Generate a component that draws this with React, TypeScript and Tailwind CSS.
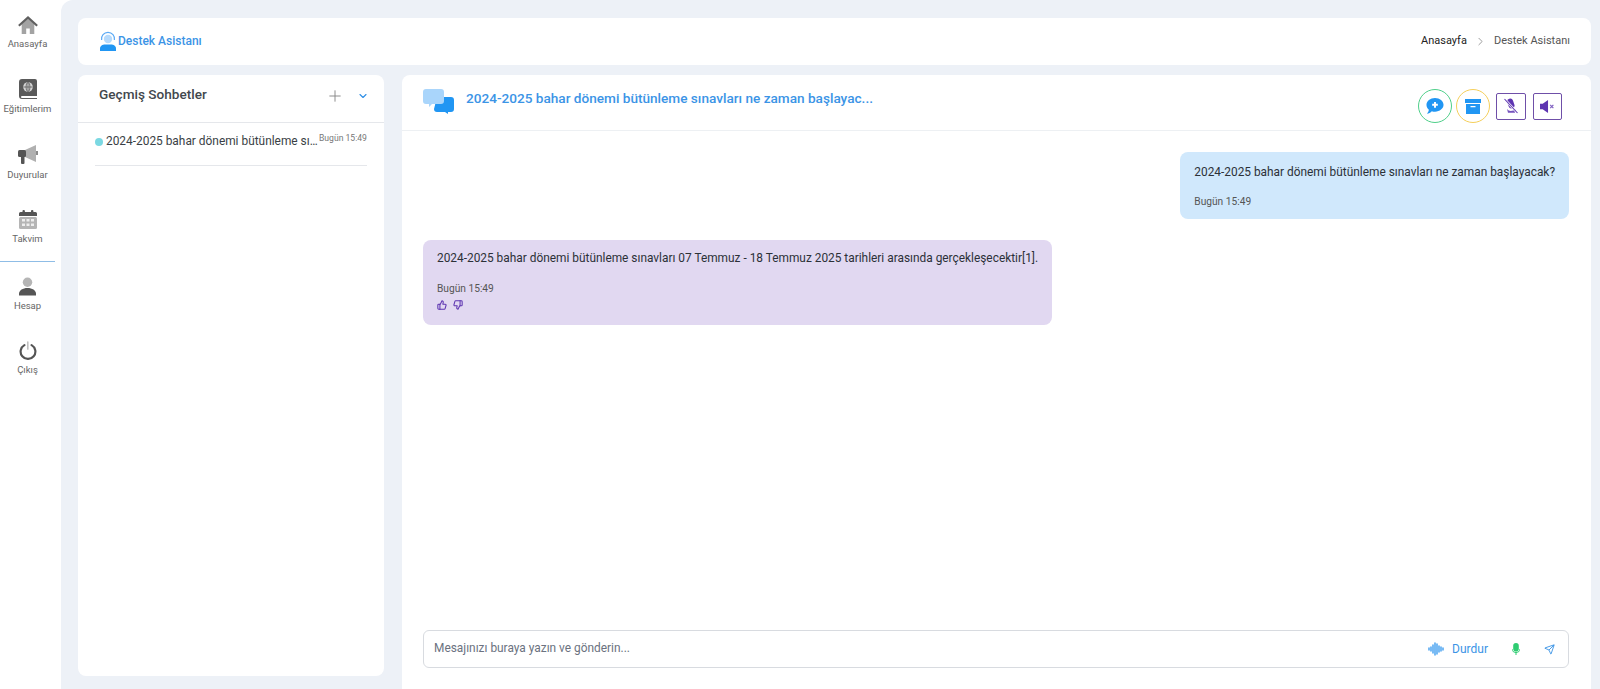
import { ChevronDown, ChevronRight, Plus, Send, ThumbsDown, ThumbsUp } from 'lucide-react';

const font = { fontFamily: 'Roboto, sans-serif' };

function HomeIcon() {
  return (
    <svg width="22" height="18" viewBox="0 0 24 20">
      <path d="M5 9 12 3l7 6v11h-5v-6h-4v6H5z" fill="#a3a3a3" />
      <path d="M1 10 12 0l11 10-1.600 1.600L12 3.400 2.600 11.600z" fill="#5f5f5f" />
    </svg>
  );
}

function BookIcon() {
  return (
    <svg width="18" height="20" viewBox="0 0 18 20">
      <path d="M3 0h13a2 2 0 0 1 2 2v15H3a1 1 0 0 0 0 2h15v1H3a3 3 0 0 1-3-3V3a3 3 0 0 1 3-3z" fill="#5a5a5a" />
      <circle cx="9" cy="8" r="4.800" fill="#d6d6d6" />
      <path d="M4.500 8h9M9 3.500v9" stroke="#5a5a5a" strokeWidth="0.800" />
      <ellipse cx="9" cy="8" rx="2" ry="4.500" fill="none" stroke="#5a5a5a" strokeWidth="0.800" />
    </svg>
  );
}

function MegaphoneIcon() {
  return (
    <svg width="20" height="20" viewBox="0 0 20 20">
      <path d="M7 5 18 0v17L7 12z" fill="#b0b0b0" />
      <rect x="0" y="5" width="8" height="7" rx="1.500" fill="#555" />
      <rect x="3" y="11" width="3.500" height="8" rx="1" fill="#555" />
      <rect x="18" y="6" width="2" height="4" fill="#8a8a8a" />
    </svg>
  );
}

function CalendarIcon() {
  return (
    <svg width="18" height="19" viewBox="0 0 18 19">
      <rect y="7" width="18" height="12" rx="1.500" fill="#b5b5b5" />
      <path d="M1.500 2h15A1.500 1.500 0 0 1 18 3.500V6H0V3.500A1.500 1.500 0 0 1 1.500 2z" fill="#555" />
      <rect x="3.500" y="0" width="2.400" height="4" rx="1" fill="#555" />
      <rect x="12" y="0" width="2.400" height="4" rx="1" fill="#555" />
      <path d="M3 9h3v2.500H3zM7.500 9h3v2.500h-3zM12 9h3v2.500h-3zM3 13.500h3V16H3zM7.500 13.500h3V16h-3zM12 13.500h3V16h-3z" fill="#eee" />
    </svg>
  );
}

function PersonIcon() {
  return (
    <svg width="17" height="19" viewBox="0 0 18 19">
      <circle cx="9" cy="5" r="5" fill="#b5b5b5" />
      <path d="M0 19v-2c0-3.500 4-6 9-6s9 2.500 9 6v2z" fill="#555" />
    </svg>
  );
}

function PowerIcon() {
  return (
    <svg width="18" height="19" viewBox="0 0 20 21">
      <path d="M6 4.500a8.200 8.200 0 1 0 8 0" fill="none" stroke="#555" strokeWidth="2.400" strokeLinecap="round" />
      <path d="M9.800 1v8" stroke="#bbb" strokeWidth="1.600" strokeLinecap="round" />
    </svg>
  );
}

function AgentIcon() {
  return (
    <svg width="18" height="20" viewBox="0 0 18 20">
      <path d="M2.600 9A6.500 6.500 0 1 1 15.400 9" fill="none" stroke="#5aa9f5" strokeWidth="1.200" />
      <circle cx="9" cy="8" r="4.200" fill="#b6dafc" />
      <path d="M1 20v-2.500C1 15 3.500 13.500 6 13.500h6c2.500 0 5 1.500 5 4V20z" fill="#2196f3" />
    </svg>
  );
}

function ChatsIcon() {
  return (
    <svg width="32" height="26" viewBox="0 0 32 26">
      <path d="M14 9h14a3 3 0 0 1 3 3v9a3 3 0 0 1-3 3h-3v2l-3-2h-8a3 3 0 0 1-3-3z" fill="#2196f3" />
      <path d="M3 1h15a3 3 0 0 1 3 3v9a3 3 0 0 1-3 3H9l-3 3v-3H3a3 3 0 0 1-3-3V4a3 3 0 0 1 3-3z" fill="#a9d5fb" />
    </svg>
  );
}

function BubblePlusIcon() {
  return (
    <svg width="18" height="16" viewBox="0 0 20 18">
      <path d="M10 0c5.300 0 9.600 3.400 9.600 7.700s-4.300 7.700-9.600 7.700c-1.300 0-2.500-.2-3.600-.6C5 16.300 3 17.400 1 17.600c1-1 1.900-2.600 2.100-4.300C1.400 11.900.4 9.900.4 7.700.4 3.400 4.700 0 10 0z" fill="#2196f3" />
      <path d="M10 4.500v6.400M6.800 7.700h6.400" stroke="#fff" strokeWidth="2.200" />
    </svg>
  );
}

function ArchiveIcon() {
  return (
    <svg width="16" height="15" viewBox="0 0 16 15">
      <rect width="16" height="4" fill="#2196f3" />
      <path d="M1 5h14v10H1zM5.500 7v1.200h5V7z" fill="#2196f3" fillRule="evenodd" />
    </svg>
  );
}

function MicOffIcon() {
  return (
    <svg width="16" height="16" viewBox="0 0 16 16">
      <path d="M5 3.500a3 3 0 0 1 6 0v4a3 3 0 0 1-6 0z" fill="#5e35b1" transform="rotate(-20 8 6)" />
      <path d="M4 11c2 2.600 5.500 2.600 8.500 0l-.6 3.800H5z" fill="#5e35b1" opacity="0.850" />
      <path d="M1.500 1 14.500 15" stroke="#fff" strokeWidth="2.400" />
      <path d="M1.500 1 14.500 15" stroke="#5e35b1" strokeWidth="1.100" />
    </svg>
  );
}

function SpeakerOffIcon() {
  return (
    <svg width="15" height="13" viewBox="0 0 14 12">
      <path d="M0 3.500h2.500L7.500 0v12L2.500 8.500H0z" fill="#5e35b1" />
      <path d="M9.500 4.500l3 3M12.500 4.500l-3 3" stroke="#7e5fc0" strokeWidth="1.100" />
    </svg>
  );
}

function WaveIcon() {
  return (
    <svg width="16" height="14" viewBox="0 0 16 14">
      <path d="M1 6v2M3 5v4M5 3v8M7 1v12M9 2v10M11 4v6M13 5v4M15 6v2" stroke="#3f9df0" strokeWidth="1.400" strokeLinecap="round" />
    </svg>
  );
}

function MicIcon() {
  return (
    <svg width="8" height="12" viewBox="0 0 8 12">
      <rect x="1.200" width="5.600" height="8.500" rx="2.800" fill="#2ecc71" />
      <path d="M0 6c0 2.200 1.800 3.500 4 3.500S8 8.200 8 6M4 9.500V12" fill="none" stroke="#2ecc71" />
    </svg>
  );
}

const navTop = [
  { label: 'Anasayfa', icon: <HomeIcon />, h: 'h-[65px]' },
  { label: 'Eğitimlerim', icon: <BookIcon />, h: 'h-[66px]' },
  { label: 'Duyurular', icon: <MegaphoneIcon />, h: 'h-[64px]' },
  { label: 'Takvim', icon: <CalendarIcon />, h: 'h-[54px]' },
];

const navBottom = [
  { label: 'Hesap', icon: <PersonIcon /> },
  { label: 'Çıkış', icon: <PowerIcon /> },
];

function NavItem({ label, icon, className }: { label: string; icon: React.ReactNode; className: string }) {
  return (
    <div className={`flex w-[55px] flex-col items-center ${className}`}>
      <div className="flex h-[22px] items-end justify-center">{icon}</div>
      <span className="mt-[4px] text-[9.5px] leading-[12px] whitespace-nowrap text-[#666]">{label}</span>
    </div>
  );
}

export default function App() {
  return (
    <div className="flex h-[689px] w-[1600px] overflow-hidden bg-white" style={font}>
      {/* Sidebar */}
      <div className="w-[61px] shrink-0 pt-[12px]">
        {navTop.map((item) => (
          <NavItem key={item.label} label={item.label} icon={item.icon} className={item.h} />
        ))}
        <div className="mr-[6px] mb-[12px] h-px bg-[#8fbde6]" />
        {navBottom.map((item) => (
          <NavItem key={item.label} label={item.label} icon={item.icon} className="h-[64px]" />
        ))}
      </div>

      {/* Main */}
      <div className="flex min-w-0 flex-1 flex-col rounded-tl-xl bg-[#edf1f7] pt-[18px] pr-[9px] pl-[17px]">
        <div className="flex h-[47px] shrink-0 items-center justify-between rounded-lg bg-white pr-[21px] pl-[21px]">
          <div className="flex items-center gap-[1px] pb-[1px]">
            <AgentIcon />
            <span className="text-[12px] font-medium text-[#3b94e6]">Destek Asistanı</span>
          </div>
          <div className="flex items-center text-[11px] text-[#555]">
            <span className="text-[#222]">Anasayfa</span>
            <ChevronRight className="mx-[7px] h-[13px] w-[13px] text-[#888]" strokeWidth={1.5} />
            <span>Destek Asistanı</span>
          </div>
        </div>

        <div className="mt-[10px] flex min-h-0 flex-1 gap-[18px]">
          {/* Sol panel */}
          <div className="mb-[13px] w-[306px] shrink-0 rounded-lg bg-white">
            <div className="flex h-[48px] items-center justify-between border-b border-[#e5e7eb] pr-[15px] pl-[21px]">
              <span className="pb-[8px] text-[13.6px] font-medium text-[#42474d]">Geçmiş Sohbetler</span>
              <div className="flex items-center gap-[13px] pb-[5px]">
                <Plus className="h-[18px] w-[18px] text-[#888]" strokeWidth={1.25} />
                <ChevronDown className="h-[12px] w-[12px] text-[#2f8fe6]" strokeWidth={2.25} />
              </div>
            </div>
            <div className="mx-[17px] flex h-[43px] border-b border-[#e5e7eb] pt-[10px]">
              <span className="mt-[5px] mr-[3px] h-[8px] w-[8px] shrink-0 rounded-full bg-[#7bd8e2]" />
              <span className="w-[213px] shrink-0 truncate text-[11.9px] leading-[16px] text-[#3a3f45]">
                2024-2025 bahar dönemi bütünleme sınavları ne zaman başlayacak?
              </span>
              <span className="text-[8.6px] leading-[10px] whitespace-nowrap text-[#777]">Bugün 15:49</span>
            </div>
          </div>

          {/* Sohbet */}
          <div className="flex min-w-0 flex-1 flex-col rounded-t-lg bg-white">
            <div className="flex h-[56px] shrink-0 items-start justify-between border-b border-[#edf0f3] pr-[29px] pl-[21px]">
              <div className="flex items-start gap-[11px] pt-[13px]">
                <ChatsIcon />
                <span className="mt-[2px] text-[13.6px] leading-[16px] font-medium text-[#3b94e6]">
                  2024-2025 bahar dönemi bütünleme sınavları ne zaman başlayac...
                </span>
              </div>
              <div className="flex items-center pt-[14px]">
                <button className="flex h-[34px] w-[34px] items-center justify-center rounded-full border border-[#4fcf8a]">
                  <BubblePlusIcon />
                </button>
                <button className="ml-[4px] flex h-[34px] w-[34px] items-center justify-center rounded-full border border-[#f5cf5b]">
                  <ArchiveIcon />
                </button>
                <button className="ml-[6px] flex h-[27px] w-[30px] items-center justify-center rounded-[2px] border border-[#6f4fa8]">
                  <MicOffIcon />
                </button>
                <button className="ml-[7px] flex h-[27px] w-[29px] items-center justify-center rounded-[2px] border border-[#6f4fa8]">
                  <SpeakerOffIcon />
                </button>
              </div>
            </div>

            <div className="flex flex-1 flex-col pt-[21px] pr-[22px] pl-[21px]">
              <div className="flex justify-end">
                <div className="rounded-lg bg-[#d0e8fc] px-[14px] pt-[11px] pb-[10px] text-[#2c3138]">
                  <p className="text-[11.88px] leading-[18px]">2024-2025 bahar dönemi bütünleme sınavları ne zaman başlayacak?</p>
                  <p className="mt-[14px] text-[10.2px] leading-[14px] text-[#555]">Bugün 15:49</p>
                </div>
              </div>
              <div className="mt-[21px] flex justify-start">
                <div className="rounded-lg bg-[#e1d8f1] px-[14px] pt-[9px] pb-[15px] text-[#2c3138]">
                  <p className="text-[11.88px] leading-[18px]">
                    2024-2025 bahar dönemi bütünleme sınavları 07 Temmuz - 18 Temmuz 2025 tarihleri arasında gerçekleşecektir[1].
                  </p>
                  <p className="mt-[15px] text-[10.2px] leading-[14px] text-[#555]">Bugün 15:49</p>
                  <div className="mt-[4px] flex gap-[6px]">
                    <ThumbsUp className="h-[10px] w-[10px] text-[#5e35b1]" strokeWidth={2.5} />
                    <ThumbsDown className="h-[10px] w-[10px] text-[#5e35b1]" strokeWidth={2.5} />
                  </div>
                </div>
              </div>
            </div>

            {/* Mesaj kutusu */}
            <div className="mb-[21px] ml-[21px] mr-[22px] flex h-[38px] shrink-0 items-center justify-between rounded-md border border-[#d8dbe0] pr-[13px] pl-[10px]">
              <span className="text-[11.9px] text-[#6b7280]">Mesajınızı buraya yazın ve gönderin...</span>
              <div className="flex items-center">
                <WaveIcon />
                <span className="ml-[8px] text-[12px] text-[#3b94e6]">Durdur</span>
                <span className="ml-[24px] flex"><MicIcon /></span>
                <Send className="ml-[24px] h-[11px] w-[11px] text-[#3b94e6]" />
              </div>
            </div>
          </div>
        </div>
      </div>
    </div>
  );
}
